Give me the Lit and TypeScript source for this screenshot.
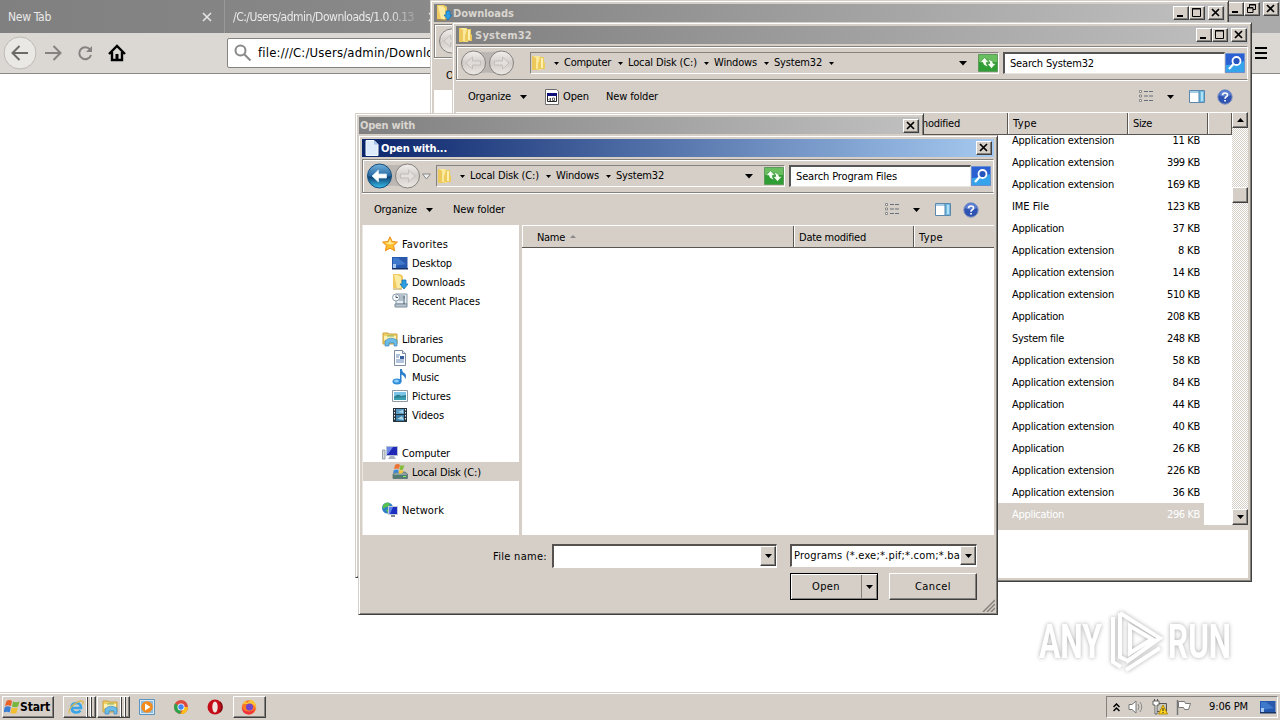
import { LitElement, html, svg, css } from "lit";
import { customElement, property, query } from "lit/decorators.js";
import { classMap } from "lit/directives/class-map.js";

interface FileRow {
  type: string;
  size: string;
  w: number;
}

interface TreeItem {
  label: string;
  icon: string;
  w: number;
  child?: boolean;
  selected?: boolean;
}

const EXT = { type: "Application extension", w: 102 };
const APP = { type: "Application", w: 52 };

const FILES: FileRow[] = [
  { ...EXT, size: "11 KB" },
  { ...EXT, size: "399 KB" },
  { ...EXT, size: "169 KB" },
  { type: "IME File", w: 37, size: "123 KB" },
  { ...APP, size: "37 KB" },
  { ...EXT, size: "8 KB" },
  { ...EXT, size: "14 KB" },
  { ...EXT, size: "510 KB" },
  { ...APP, size: "208 KB" },
  { type: "System file", w: 52, size: "248 KB" },
  { ...EXT, size: "58 KB" },
  { ...EXT, size: "84 KB" },
  { ...APP, size: "44 KB" },
  { ...EXT, size: "40 KB" },
  { ...APP, size: "26 KB" },
  { ...EXT, size: "226 KB" },
  { ...EXT, size: "36 KB" },
  { ...APP, size: "296 KB" },
];

const TREE: (TreeItem | null)[] = [
  { label: "Favorites", icon: "star", w: 46 },
  { label: "Desktop", icon: "desktop", w: 40, child: true },
  { label: "Downloads", icon: "downloads", w: 53, child: true },
  { label: "Recent Places", icon: "recent", w: 68, child: true },
  null,
  { label: "Libraries", icon: "libraries", w: 41 },
  { label: "Documents", icon: "document", w: 54, child: true },
  { label: "Music", icon: "music", w: 27, child: true },
  { label: "Pictures", icon: "picture", w: 39, child: true },
  { label: "Videos", icon: "video", w: 32, child: true },
  null,
  { label: "Computer", icon: "computer", w: 48 },
  { label: "Local Disk (C:)", icon: "disk", w: 69, child: true, selected: true },
  null,
  { label: "Network", icon: "network", w: 42 },
];

const ICONS: Record<string, any> = {
  star: svg`<path d="M8 .8l2.200 4.700 5.200.6-3.800 3.500 1 5.200L8 12.200l-4.600 2.600 1-5.200L.6 6.100l5.200-.6z" fill="#ffc02e" stroke="#e98b1c"/><path d="M8 3l1.400 3.500 3.500.5L8 8.500 3 7l3.600-.5z" fill="#ffe99a"/>`,
  desktop: svg`<path d="M0 2h15.500v12H0z" fill="#2457ae"/><path d="M1 3h14v6L1 11z" fill="#3f79cc"/><path d="M6 3h9v7z" fill="#2a58ab"/><path d="M0 13h16v1.500H0z" fill="#173363"/><path d="M1 9h3v4H1z" fill="#a9c8ee"/>`,
  folder: svg`<path d="M1 1h8v14H1z" fill="#edc85c"/><path d="M2 1h6l2 2v12l-5-1V3z" fill="#fbe99b"/><path d="M9 2h4v5l1 1v6H7V9z" fill="#ecca5c"/><path d="M10 3h2v10h-2z" fill="#fff0b0"/>`,
  downloads: svg`<path d="M1 0h7l3 2v12H1z" fill="#f1cb5f"/><path d="M2 1h4l3 2v12l-4-1z" fill="#fbeaa2"/><path d="M1 15h9" stroke="#bb953a"/><path d="M10 6h4v4h2l-4 5-4-5h2z" fill="#2c9fe3" stroke="#1774b8" stroke-width=".8"/>`,
  recent: svg`<path d="M4 1h11v10H4z" fill="#e7eef3" stroke="#8597a6"/><path d="M7 3h6M7 5h6M7 7h4" stroke="#7c8fa0"/><path d="M3 11h12v3H3z" fill="#b8c5cf" stroke="#7a8b99"/><circle cx="4" cy="4.500" r="3.500" fill="#f6f9fb" stroke="#8fa0ad"/><path d="M4 2.500v2h2" stroke="#556" fill="none"/><path d="M12 3v8" stroke="#4a5c6c"/>`,
  libraries: svg`<path d="M1 2h5l1 1h8v10H1z" fill="#f2cf63" stroke="#c9a13f"/><path d="M2 5h12v4H2z" fill="#fdf0b5"/><path d="M3 10q5-5 12-1v6h-3v-3H7v3H3z" fill="#6cbce9" stroke="#3f88bb" stroke-width=".7"/><path d="M5 5h7" stroke="#7bb565"/>`,
  document: svg`<path d="M2.500.5h8l3 3v12h-11z" fill="#fff" stroke="#7c8ba0"/><path d="M10.500.5v3h3" fill="#dbe6f2" stroke="#7c8ba0"/><path d="M4 5h4M4 7h3M9 8h3M4 10h8M4 12h8" stroke="#6287b8"/><path d="M8 6h4v3H8z" fill="#365f9d"/>`,
  music: svg`<ellipse cx="5" cy="12.500" rx="4.500" ry="3" fill="#2f8ddb"/><ellipse cx="4.500" cy="12" rx="2.500" ry="1.500" fill="#8dcbf6"/><path d="M8 0h2q0 3 3 4.500 2 2 0 6 .5-3-3.500-5v7H8z" fill="#2c7fca"/>`,
  picture: svg`<path d="M.5 2.500h15v11H.5z" fill="#fff" stroke="#8c9aa5"/><path d="M2 4h12v8H2z" fill="#7cc4e8"/><path d="M2 9q4-4 7-1l5-1v5H2z" fill="#2c7f8f"/><path d="M2 10l12-1v3H2z" fill="#3a9fb0"/>`,
  video: svg`<path d="M1 1h14v14H1z" fill="#26323d"/><path d="M4 2h8v5H4z" fill="#5b9dc4"/><path d="M4 8h8v6H4z" fill="#3e7fa8"/><path d="M6 5l5-2v3zM5 12l5-3 2 4z" fill="#acd8e8"/><path d="M2.500 2v12M13.500 2v12" stroke="#e9eef1" stroke-dasharray="1.500 1.500"/>`,
  computer: svg`<path d="M.5 5h2.500v9H.5z" fill="#d5dbe0" stroke="#848e97" stroke-width=".8"/><path d="M4 1h12v10H4z" fill="#b7c3d2"/><path d="M5 2h10v8H5z" fill="#2028b8"/><path d="M5 2h6L6 9H5z" fill="#6d87e6"/><path d="M8 11h4l2 3H6z" fill="#a9b3c0"/>`,
  disk: svg`<path d="M1 10l3-2h9l2.500 2v4.500H1z" fill="#8aa1a2" stroke="#4f6667" stroke-width=".7"/><path d="M1 11h14v3.500H1z" fill="#547b73"/><path d="M11 12.500h3" stroke="#7df06a"/><path d="M3 1q3-2 5 0L7 5Q5 4 2 5z" fill="#ee7330"/><path d="M8.500 1q2 1 4 0L11 5.500q-2 1-3.500 0z" fill="#83bd3a"/><path d="M2 6q3-1 4.500 0L6 9Q4 8 1 9z" fill="#3989d8"/><path d="M7.500 6q2 1 4 0l-1 3q-2 1-4 0z" fill="#f6c736"/>`,
  network: svg`<circle cx="5.500" cy="6" r="5.500" fill="#2f7fc4"/><path d="M2 2q4-3 6 0-1 3-3 3t-4 2q-1-3 1-5zM4 8l4-1-2 4z" fill="#5bc14e"/><path d="M6 4h10v9H6z" fill="#c3ccd8"/><path d="M7 5h8v7H7z" fill="#1c2fc0"/><path d="M7 5h4l-3 7H7z" fill="#5d82ea"/><path d="M9 13h4v2H9z" fill="#7b8794"/>`,
  page: svg`<path d="M2 .5h8l4 4v11H2z" fill="#dceafb" stroke="#f4f9ff"/><path d="M10 .5v4h4" fill="#9fc1ea"/>`,
  exe: svg`<path d="M1.500.5h11l2 2v13h-13z" fill="#fff" stroke="#6c6c6c"/><path d="M3.500 4.500h9v8h-9z" fill="#fff" stroke="#222"/><path d="M3 4h10v3H3z" fill="#10107a"/><path d="M5 10.500l1.500-1.500v3zM8.500 9h2v2.500h-2z" stroke="#222" fill="none" stroke-width=".7"/>`,
  list: svg`<path d="M1.500 1.500h2v2h-2zM1.500 6h2v2h-2zM1.500 10.500h2v2h-2z" fill="#fff" stroke="#888"/><path d="M6 2.500h4M11 2.500h4M6 7h4M11 7h4M6 11.500h4M11 11.500h4" stroke="#66707c"/>`,
  pane: svg`<path d="M.5 1.500h15v12H.5z" fill="#fff" stroke="#5c87ad"/><path d="M1 2h9v2H1z" fill="#a8cde6"/><path d="M10 2h5v11h-5z" fill="#6fbbe0"/><path d="M12 3h2v9h-2z" fill="#b3e0f4"/><path d="M10 2v11" stroke="#4c83ad"/>`,
  help: svg`<circle cx="8" cy="8" r="7.200" fill="#2f53b3" stroke="#7f93bd"/><path d="M2 6a6 5 0 0 1 12 0q-6 3-12 0z" fill="#5d80d2"/><path d="M5.500 6.300q0-2.300 2.500-2.300t2.500 2q0 1.200-1.500 2-1 .6-1 1.700" fill="none" stroke="#fff" stroke-width="1.600"/><path d="M7.200 11h1.700v1.600H7.200z" fill="#fff"/>`,
  ie: svg`<path d="M12.500 11.500Q11 13.500 8.500 13.500 4 13.500 3.500 9 3.500 4 8.500 4 13 4.500 13 9H4" fill="none" stroke="#3aa5e6" stroke-width="2.600"/><path d="M1.500 14.500Q-.5 10 7 4.500 13 .5 15 2.500q.8 1-.6 3" fill="none" stroke="#e0b84a" stroke-width="1.200"/>`,
  player: svg`<path d="M.5.5h15v15H.5z" fill="#d8e8f4" stroke="#5b94c0"/><path d="M2 2h12v12H2z" fill="#8fbbdc"/><circle cx="8" cy="8" r="5.800" fill="#f28a1c"/><path d="M6 4.500L11.500 8 6 11.500z" fill="#fff"/>`,
  chrome: svg`<circle cx="8" cy="8" r="7" fill="#dd4b3e"/><path d="M8 8L2 4.500A7 7 0 0 0 7.500 15z" fill="#2fa24c"/><path d="M8 8h7a7 7 0 0 1-7.500 7l3-5z" fill="#fbc116"/><circle cx="8" cy="8" r="3.500" fill="#fff"/><circle cx="8" cy="8" r="2.700" fill="#4285f4"/>`,
  opera: svg`<circle cx="8" cy="8" r="7.500" fill="#c40d18"/><ellipse cx="8" cy="8" rx="2.700" ry="5.500" fill="#efe6e2"/><path d="M13 3a7 7 0 0 1 0 10" stroke="#7c0b10" fill="none" stroke-width="1.500"/>`,
  firefox: svg`<circle cx="8" cy="8.500" r="7.200" fill="#ff7a26"/><path d="M2 5L4 1.500 6 4l4-3.500Q15.500 3 15 9 12 4 8 5z" fill="#ffc235"/><circle cx="8.500" cy="8" r="3.500" fill="#7345c9"/><path d="M1 6q0 6 6 6.500 5 .5 7-3.500-.5 6-6.500 6.500Q0 15 1 6z" fill="#f0323f"/>`,
  speaker: svg`<path d="M1 5.500h3L8 2v12l-4-3.500H1z" fill="#fff" stroke="#777"/><path d="M10 5q2 3 0 6M12 3q3.500 5 0 10" fill="none" stroke="#8a8a8a"/>`,
  tray: svg`<path d="M3.500 4.500h11v8h-11z" fill="#c8c8bc" stroke="#555"/><path d="M1 2h6v4H5v9H3V6H1z" fill="#fff" stroke="#555" stroke-width=".9"/><path d="M2.500 0v2M5.500 0v2" stroke="#555"/><path d="M11 6l4.500 9h-9z" fill="#ffd51e" stroke="#b58a00"/><path d="M11 9v3M11 13v1" stroke="#222"/>`,
  flag: svg`<path d="M1.500 1v15" stroke="#777" stroke-width="1.500"/><path d="M2.500 2.500h6l1 2h5l-2 6h-4l-1-2h-5z" fill="#fff" stroke="#777"/>`,
  start: svg`<path d="M2.500 2q3-2 5.500 0L7 7Q4 5.500 1 7z" fill="#e8622a"/><path d="M9 2.500q3 1.500 6.500 0L14 7.500q-3 1.500-6 0z" fill="#76b63d"/><path d="M.8 8q3-1.500 6 0l-1 5.500Q3 12-.5 13.500z" fill="#3b7fd4"/><path d="M7.800 8.500q3 1.500 6 0L12.500 14q-3 1.500-6 0z" fill="#f2bd2f"/>`,
};

const icon = (name: string) =>
  html`<svg class="icon" width="16" height="16" viewBox="0 0 16 16">${ICONS[name]}</svg>`;

const arrow = () =>
  html`<svg class="arrow" width="7" height="4"><path d="M0 0h7L3.500 4z" /></svg>`;

const smallArrow = () =>
  html`<svg class="arrow" width="5" height="3"><path d="M0 0h5L2.500 3z" /></svg>`;

const fit = (text: string, w: number) =>
  html`<fit-text .w=${w} .text=${text}></fit-text>`;

// Label that spreads or tightens its letters to fill a given width.
@customElement("fit-text")
export class FitText extends LitElement {
  @property({ type: Number }) w = 0;

  @property({ type: String }) text = "";

  @query("span") label!: HTMLSpanElement;

  updated() {
    this.label.style.letterSpacing = "0px";
    const natural = this.label.getBoundingClientRect().width;
    const gap = (this.w - natural) / this.text.length;
    this.label.style.letterSpacing = `${gap}px`;
  }

  static styles = css`
    :host {
      display: inline-block;
      flex: none;
      white-space: pre;
    }
    span {
      display: inline-block;
    }
  `;

  render() {
    return html`<span>${this.text}</span>`;
  }
}

const shared = css`
  * {
    box-sizing: border-box;
  }
  .icon,
  .arrow,
  svg {
    display: block;
    flex: none;
  }
  .raised {
    background: #d5cfc8;
    border: 1px solid;
    border-color: #fff #404040 #404040 #fff;
    box-shadow: inset -1px -1px 0 #85817c;
  }
`;

@customElement("win-button")
export class WinButton extends LitElement {
  @property({ type: String }) kind = "close";

  static styles = [
    shared,
    css`
      :host {
        display: block;
        flex: none;
        width: 16px;
        height: 14px;
      }
      .raised {
        width: 16px;
        height: 14px;
      }
      svg {
        width: 14px;
        height: 12px;
        fill: none;
        stroke: #000;
      }
    `,
  ];

  glyph() {
    if (this.kind === "min") return svg`<path d="M3 9h6" stroke-width="2" />`;
    if (this.kind === "max")
      return svg`<path d="M2.500 1.500h8v8h-8zM2 2h9" />`;
    if (this.kind === "restore")
      return svg`<path d="M4.500 4V1.500h6v5H8M4 2h7M2.500 4.500h5.500v5H2.500zM2 5h6" />`;
    return svg`<path d="M3 2l7 7M10 2L3 9" stroke-width="1.700" />`;
  }

  render() {
    return html`<div class="raised"><svg>${this.glyph()}</svg></div>`;
  }
}

// Back / forward, breadcrumbs, refresh and search of an explorer window.
@customElement("address-bar")
export class AddressBar extends LitElement {
  @property({ type: Array }) crumbs: [string, number][] = [];

  @property({ type: String }) search = "";

  @property({ type: Number }) labelWidth = 0;

  @property({ type: Number }) searchWidth = 0;

  @property({ type: Boolean }) active = false;

  static styles = [
    shared,
    css`
      :host {
        display: block;
      }
      .bar {
        display: flex;
        align-items: center;
        height: 34px;
        padding: 0 1px 0 3px;
        background: #d5cfc8;
        border: 1px solid;
        border-color: #85817c #fff #85817c #85817c;
        box-shadow: inset 1px 1px 0 #fff, 0 1px 0 #fff;
      }
      .path {
        display: flex;
        align-items: center;
        flex: 1;
        height: 22px;
        margin-right: 4px;
        border: 1px solid;
        border-color: #85817c #fff #fff #85817c;
      }
      .path > .arrow {
        margin: 0 5px 0 7px;
      }
      .space {
        flex: 1;
      }
      .drop {
        margin-right: 11px;
      }
      .search {
        height: 22px;
        padding: 3px 5px;
        line-height: 14px;
        background: #fff;
        border: 2px solid;
        border-width: 2px 1px 1px 2px;
        border-color: #555 #e8e4df #e8e4df #555;
      }
      .nav {
        margin-right: 15px;
      }
      .nav.active {
        margin-right: 1px;
      }
    `,
  ];

  render() {
    const on = this.active;
    return html`<div class="bar">
      <svg class=${classMap({ nav: true, active: on })} width=${on ? 69 : 55} height="28">
        <defs>
          <linearGradient id="gray" x2="0" y2="1">
            <stop offset="0" stop-color="#f2efec" />
            <stop offset=".5" stop-color="#d2cdc9" />
            <stop offset="1" stop-color="#ece8e4" />
          </linearGradient>
          <linearGradient id="blue" x2="0" y2="1">
            <stop offset="0" stop-color="#75b3dc" />
            <stop offset=".48" stop-color="#296ba5" />
            <stop offset=".55" stop-color="#104474" />
            <stop offset="1" stop-color="#38c0eb" />
          </linearGradient>
        </defs>
        <path d="M12 1.500Q27 5 41 1.500V26Q27 21 12 26z" fill="#bbb6b1" />
        <circle cx="13.500" cy="14" r="12" fill=${on ? "url(#blue)" : "url(#gray)"} stroke=${on ? "#174e7c" : "#85827f"} />
        <circle cx="41.500" cy="14" r="12" fill="url(#gray)" stroke="#85827f" />
        <path
          d="M6 14l6.500-6v4h8v4h-8v4z"
          fill=${on ? "#fff" : "#dfdbd8"}
          stroke=${on ? "#cfe4f3" : "#bdb9b5"}
          stroke-width=".8"
        />
        <path d="M49 14l-6.500-6v4h-8v4h8v4z" fill="#e2dfdc" stroke="#bbb7b3" stroke-width=".8" />
        ${on ? svg`<path d="M56.500 12h8l-4 5z" fill="#eee" stroke="#888" />` : ""}
      </svg>
      <div class="path">
        ${icon("folder")}
        ${this.crumbs.map(([text, w]) => html`${smallArrow()}${fit(text, w)}`)}
        ${on ? "" : smallArrow()}
        <span class="space"></span>
        <svg class="drop" width="8" height="5"><path d="M0 0h8L4 4.500z" /></svg>
        <svg width="20" height="18">
          <path d="M.5.5h19v17H.5z" fill="#2f9f35" stroke="#5f9a5d" />
          <path d="M1 1h18v7H1z" fill="#69bf60" />
          <path
            d="M2 8.500l4.500-5 4.500 5H8.300q0 2 2 4-5-.3-5.500-4zM18 9.500l-4.500 5-4.500-5h2.700q0-2-2-4 5 .3 5.500 4z"
            fill="#f4fff2"
            stroke="#2c8c2a"
            stroke-width=".6"
          />
        </svg>
      </div>
      <div class="search" style="width:${this.searchWidth}px">
        ${fit(this.search, this.labelWidth)}
      </div>
      <svg width="21" height="20">
        <path d="M.5.5h19v19H.5z" fill="#2b60d2" stroke="#6a8fd0" />
        <path d="M1 12q9 0 18-4v11H1z" fill="#35a4ea" />
        <circle cx="11.500" cy="8" r="4" fill="#2456bd" stroke="#fff" stroke-width="1.800" />
        <path d="M8.500 11L4 16" stroke="#fff" stroke-width="2.200" />
      </svg>
    </div>`;
  }
}

@customElement("app-root")
export class AppRoot extends LitElement {
  static styles = [
    shared,
    css`
      :host {
        display: block;
        position: relative;
        width: 1280px;
        height: 720px;
        overflow: hidden;
        background: #fff;
        color: #000;
        font: 11px/14px "DejaVu Sans Condensed", "DejaVu Sans", sans-serif;
      }
      .browser {
        display: flex;
        flex-direction: column;
        height: 692px;
      }
      .tabs {
        display: flex;
        height: 33px;
        color: #e9e9e9;
        font-size: 12px;
        background: linear-gradient(90deg, #808080, #888 30%, #aaa 98%);
      }
      .tab {
        display: flex;
        align-items: center;
        justify-content: space-between;
        width: 225px;
        padding: 1px 12px 0 8px;
        border-right: 1px solid #999;
      }
      .tab.path {
        border: 0;
        justify-content: flex-start;
        gap: 14px;
        width: 210px;
        white-space: nowrap;
      }
      .fade {
        mask-image: linear-gradient(90deg, #000 86%, #0004);
      }
      .captions {
        display: flex;
        margin: 2px 1px 0 auto;
      }
      .captions win-button:last-child {
        margin-left: 3px;
      }
      .toolbar {
        display: flex;
        align-items: center;
        height: 41px;
        padding: 0 12px 0 3px;
        background: #dbd8d3;
        border-bottom: 1px solid #8b8986;
      }
      .toolbar .url {
        display: flex;
        align-items: center;
        gap: 6px;
        width: 900px;
        height: 30px;
        margin-left: 92px;
        padding-left: 6px;
        font-size: 13px;
        background: #fff;
        border: 1px solid #85827f;
        border-radius: 2px;
      }
      .menu {
        margin-left: auto;
      }
      .window {
        position: absolute;
        display: flex;
        flex-direction: column;
        padding: 3px;
        background: #d5cfc8;
        border: 1px solid;
        border-color: #d5cfc8 #404040 #404040 #d5cfc8;
        box-shadow: inset 1px 1px 0 #fff, inset -1px -1px 0 #85817c;
      }
      .title {
        display: flex;
        align-items: center;
        flex: none;
        height: 18px;
        padding: 0 1px 0 2px;
        gap: 1px;
        color: #d9d5cf;
        font-weight: bold;
        background: linear-gradient(90deg, #808080, #c0c0c0);
      }
      .title win-button {
        margin-left: 2px;
      }
      .title fit-text {
        margin-right: auto;
        padding-top: 1px;
      }
      .title .group {
        display: flex;
      }
      .title .group win-button {
        margin: 0;
      }
      .title.active {
        padding-right: 2px;
        color: #fff;
        background: linear-gradient(90deg, #0b256b, #a5c9f0);
      }
      .downloads {
        left: 430px;
        top: 0;
        width: 799px;
        height: 300px;
      }
      .downloads .organize {
        flex: none;
        height: 32px;
        padding: 11px 0 0 12px;
      }
      .downloads .below {
        flex: 1;
        background: #fff;
      }
      .window address-bar {
        margin-top: 2px;
      }
      .system {
        left: 452px;
        top: 22px;
        width: 800px;
        height: 560px;
      }
      .commands {
        display: flex;
        align-items: center;
        flex: none;
        height: 32px;
        padding: 1px 15px 0 12px;
      }
      .commands .arrow {
        margin-left: 9px;
      }
      .commands .tools {
        display: flex;
        align-items: center;
        margin-left: auto;
      }
      .tools .arrow {
        margin: 0 15px 0 13px;
      }
      .tools .icon:last-child {
        margin-left: 12px;
      }
      .open-file {
        display: flex;
        align-items: center;
        gap: 3px;
        margin: 0 17px;
      }
      .plain {
        margin-left: 20px;
      }
      .listing {
        display: flex;
        height: 413px;
        background: #fff;
      }
      .table {
        display: flex;
        flex-direction: column;
        flex: 1;
        overflow: hidden;
      }
      .header {
        display: flex;
        flex: none;
        height: 23px;
        overflow: hidden;
        background: #d5cfc8;
        border-top: 1px solid #fff;
        border-bottom: 1px solid #5a5753;
      }
      .cell {
        flex: none;
        padding: 4px 4px 0 5px;
        border-right: 1px solid #5a5753;
        box-shadow: inset 1px 0 0 #fff;
        white-space: nowrap;
      }
      .cell.date {
        width: 120px;
      }
      .cell.type {
        width: 120px;
      }
      .cell.size {
        width: 80px;
      }
      .cell.rest {
        width: 24px;
      }
      .cell.gap {
        width: 432px;
      }
      .rows {
        margin-top: -6px;
      }
      .clip {
        overflow: hidden;
        flex: 1;
      }
      .row {
        display: flex;
        align-items: center;
        justify-content: space-between;
        width: 748px;
        height: 22px;
        padding: 2px 4px 0 556px;
      }
      .row.selected {
        color: #fff;
        background: #d5cfc8;
      }
      .scroll {
        display: flex;
        flex-direction: column;
        width: 16px;
        background: repeating-conic-gradient(#fff 0 25%, #d5cfc8 0 50%) 0 0 / 2px
          2px;
      }
      .scroll .raised {
        display: grid;
        place-items: center;
        height: 16px;
      }
      .scroll .thumb {
        margin: 59px 0 auto;
      }
      .up {
        transform: rotate(180deg);
      }
      .details {
        flex: 1;
        margin-top: 5px;
        background: #fff;
      }
      .open-with {
        left: 355px;
        top: 113px;
        width: 569px;
        height: 465px;
      }
      .open-with .title {
        height: 17px;
        padding-left: 1px;
      }
      .open-with .title fit-text {
        padding-top: 0;
      }
      .dialog {
        left: 358px;
        top: 135px;
        width: 640px;
        height: 480px;
      }
      .dialog .header .cell {
        padding-top: 5px;
      }
      .body {
        display: flex;
        flex: none;
        height: 310px;
      }
      .tree {
        width: 157px;
        padding-top: 9px;
        background: #fff;
        border-left: 1px solid #eae7e3;
      }
      .item {
        display: flex;
        align-items: center;
        gap: 4px;
        height: 19px;
        padding-left: 19px;
      }
      .item fit-text {
        padding-top: 2px;
      }
      .item.child {
        padding-left: 29px;
      }
      .item.selected {
        background: #d5cfc8;
      }
      .files {
        flex: 1;
        overflow: hidden;
        margin-left: 3px;
        background: #fff;
      }
      .cell.name {
        display: flex;
        gap: 5px;
        width: 272px;
        padding-left: 15px;
      }
      .sort {
        margin-top: 4px;
      }
      .footer {
        display: grid;
        grid-template-columns: 225px 187px;
        justify-content: end;
        gap: 5px 13px;
        padding: 9px 17px 0 0;
      }
      .field {
        display: flex;
        height: 24px;
        background: #fff;
        border: 2px solid;
        border-width: 2px 1px 1px 2px;
        border-color: #55524f #fff #fff #55524f;
      }
      .field .raised {
        display: grid;
        place-items: center;
        width: 16px;
        margin: 0 0 1px auto;
        flex: none;
      }
      .field.filter {
        height: 23px;
      }
      .field .value {
        padding: 3px 0 0 2px;
      }
      .name-row {
        display: grid;
        grid-template-columns: auto 225px;
        gap: 5px;
        justify-content: end;
      }
      .name-row fit-text {
        margin-top: 6px;
      }
      .buttons {
        display: flex;
        justify-content: space-between;
        grid-column: 2;
      }
      .push {
        display: grid;
        place-items: center;
        width: 88px;
        height: 27px;
      }
      .split {
        display: grid;
        grid-template-columns: 1fr 16px;
        align-items: center;
        justify-items: center;
        border: 1px solid #000;
        box-shadow: inset 1px 1px 0 #fff, inset -1px -1px 0 #85817c;
      }
      .split .arrow {
        box-sizing: content-box;
        padding: 10px 4px 9px;
        border-left: 1px solid #85817c;
      }
      .grip {
        position: absolute;
        right: 2px;
        bottom: 2px;
      }
      .watermark {
        position: absolute;
        left: 1032px;
        top: 604px;
        filter: drop-shadow(0 0 2px #0005);
      }
      .watermark text {
        font: bold 49px Roboto, "Liberation Sans", sans-serif;
        fill: #fff;
      }
      .taskbar {
        display: flex;
        align-items: center;
        height: 28px;
        padding: 2px 0 1px 2px;
        background: #d5cfc8;
        border-top: 1px solid #d5cfc8;
        box-shadow: inset 0 1px 0 #fff;
      }
      .taskbar .raised {
        display: flex;
        align-items: center;
        height: 22px;
      }
      .start {
        width: 52px;
        padding-left: 1px;
        font-size: 12px;
        font-weight: bold;
      }
      .stacks {
        display: flex;
        gap: 1px;
        margin: 0 9px;
      }
      .stack {
        width: 33px;
        padding-left: 4px;
        gap: 2px;
      }
      .stack i {
        width: 2px;
        height: 20px;
        border-left: 1px solid #fff;
        border-right: 1px solid #404040;
        flex: none;
      }
      .quick {
        display: flex;
        align-items: center;
        gap: 18px;
        padding-right: 10px;
      }
      .firefox {
        width: 33px;
        padding-left: 7px;
      }
      .clock {
        display: flex;
        align-items: center;
        height: 22px;
        width: 172px;
        margin: 0 2px 0 auto;
        padding-left: 6px;
        gap: 8px;
        border: 1px solid;
        border-color: #85817c #fff #fff #85817c;
      }
      .clock fit-text {
        margin: 0 4px 0 9px;
      }
    `,
  ];

  captions() {
    return html`<span class="group">
        <win-button kind="min"></win-button>
        <win-button kind="max"></win-button>
      </span>
      <win-button></win-button>`;
  }

  tools() {
    return html`<div class="tools">
      ${icon("list")}${arrow()}${icon("pane")}${icon("help")}
    </div>`;
  }

  browser() {
    return html`<div class="browser">
      <div class="tabs">
        <div class="tab">
          ${fit("New Tab", 43)}
          <svg width="10" height="10">
            <path d="M1 1l8 8M9 1L1 9" stroke="#e6e6e6" stroke-width="1.600" />
          </svg>
        </div>
        <div class="tab path">
          <span class="fade">${fit("/C:/Users/admin/Downloads/1.0.0.13", 181)}</span>
          <svg width="10" height="10">
            <path d="M1 1l8 8M9 1L1 9" stroke="#e6e6e6" stroke-width="1.600" />
          </svg>
        </div>
        <div class="captions">
          <win-button kind="min"></win-button>
          <win-button kind="restore"></win-button>
          <win-button></win-button>
        </div>
      </div>
      <div class="toolbar">
        <svg width="132" height="34" fill="none" stroke-width="2">
          <circle cx="17" cy="17" r="16" fill="#eae8e4" stroke="#bdbab6" stroke-width="1" />
          <path d="M25 17H10M16.500 10L9.500 17l7 7" stroke="#6c6b69" />
          <path d="M42 17h15M50.500 10l7 7-7 7" stroke="#858381" />
          <path d="M87 13.500A6 6 0 1 0 88 19" stroke="#858381" />
          <path d="M89 10v6h-6z" fill="#858381" />
          <path d="M106 18l8-8 8 8M109 16v8h10v-8" stroke="#000" stroke-width="2.400" />
          <path d="M112.500 18h3v6h-3z" fill="#000" />
        </svg>
        <div class="url">
          <svg width="18" height="18" fill="none" stroke="#888" stroke-width="2">
            <circle cx="6.500" cy="6.500" r="5" />
            <path d="M10 10l6.500 6.500" />
          </svg>
          ${fit("file:///C:/Users/admin/Downloads/", 201)}
        </div>
        <svg class="menu" width="13" height="12">
          <path d="M0 1h12M0 6h12M0 11h12" stroke="#000" stroke-width="2" />
        </svg>
      </div>
    </div>`;
  }

  downloads() {
    return html`<section class="window downloads">
      <div class="title">
        ${icon("downloads")}${fit("Downloads", 61)}${this.captions()}
      </div>
      <address-bar></address-bar>
      <div class="organize">${fit("Organize", 43)}</div>
      <div class="below"></div>
    </section>`;
  }

  system() {
    return html`<section class="window system">
      <div class="title">
        ${icon("folder")}${fit("System32", 57)}${this.captions()}
      </div>
      <address-bar
        .crumbs=${[
          ["Computer", 47],
          ["Local Disk (C:)", 69],
          ["Windows", 43],
          ["System32", 48],
        ]}
        search="Search System32"
        .labelWidth=${84}
        .searchWidth=${222}
      ></address-bar>
      <div class="commands">
        ${fit("Organize", 43)}${arrow()}
        <span class="open-file">${icon("exe")}${fit("Open", 26)}</span>
        ${fit("New folder", 52)}${this.tools()}
      </div>
      <div class="listing">
        <div class="table">
          <div class="header">
            <div class="cell gap"></div>
            <div class="cell date">${fit("Date modified", 67)}</div>
            <div class="cell type">${fit("Type", 24)}</div>
            <div class="cell size">${fit("Size", 19)}</div>
            <div class="cell rest"></div>
          </div>
          <div class="clip">
            <div class="rows">
              ${FILES.map(
                (f, i) => html`<div
                  class=${classMap({ row: true, selected: i === FILES.length - 1 })}
                >
                  ${fit(f.type, f.w)}${fit(f.size, f.size.length * 5.5)}
                </div>`
              )}
            </div>
          </div>
        </div>
        <div class="scroll">
          <div class="raised"><span class="up">${arrow()}</span></div>
          <div class="raised thumb"></div>
          <div class="raised">${arrow()}</div>
        </div>
      </div>
      <div class="details"></div>
    </section>`;
  }

  dialog() {
    return html`<section class="window dialog">
      <div class="title active">
        ${icon("page")}${fit("Open with...", 66)}<win-button></win-button>
      </div>
      <address-bar
        active
        .crumbs=${[
          ["Local Disk (C:)", 69],
          ["Windows", 43],
          ["System32", 48],
        ]}
        search="Search Program Files"
        .labelWidth=${101}
        .searchWidth=${182}
      ></address-bar>
      <div class="commands">
        ${fit("Organize", 43)}${arrow()}
        <span class="plain">${fit("New folder", 52)}</span>${this.tools()}
      </div>
      <div class="body">
        <div class="tree">
          ${TREE.map((t) =>
            t
              ? html`<div
                  class=${classMap({
                    item: true,
                    child: !!t.child,
                    selected: !!t.selected,
                  })}
                >
                  ${icon(t.icon)}${fit(t.label, t.w)}
                </div>`
              : html`<div class="item"></div>`
          )}
        </div>
        <div class="files">
          <div class="header">
            <div class="cell name">
              ${fit("Name", 28)}
              <svg class="sort" width="6" height="3"><path d="M3 0l3 3H0z" fill="#888" /></svg>
            </div>
            <div class="cell date">${fit("Date modified", 67)}</div>
            <div class="cell type">${fit("Type", 24)}</div>
          </div>
        </div>
      </div>
      <div class="footer">
        <div class="name-row">
          ${fit("File name:", 54)}
          <div class="field"><span class="raised">${arrow()}</span></div>
        </div>
        <div class="field filter">
          <span class="value">${fit("Programs (*.exe;*.pif;*.com;*.ba", 166)}</span>
          <span class="raised">${arrow()}</span>
        </div>
        <div class="buttons">
          <div class="push split">${fit("Open", 28)}${arrow()}</div>
          <div class="push raised">${fit("Cancel", 36)}</div>
        </div>
      </div>
      <svg class="grip" width="13" height="13">
        <path d="M1 13L13 1M5 13l8-8M9 13l4-4" stroke="#85817c" stroke-width="1.500" />
      </svg>
    </section>`;
  }

  taskbar() {
    return html`<div class="taskbar">
      <div class="raised start">${icon("start")}${fit("Start", 30)}</div>
      <div class="stacks">
        <div class="raised stack">${icon("ie")}<i></i><i></i></div>
        <div class="raised stack">${icon("libraries")}<i></i><i></i></div>
      </div>
      <div class="quick">
        ${icon("player")}${icon("chrome")}${icon("opera")}
      </div>
      <div class="raised firefox">${icon("firefox")}</div>
      <div class="clock">
        <svg width="7" height="9" fill="none" stroke="#000" stroke-width="1.500">
          <path d="M.5 4l3-3 3 3M.5 8l3-3 3 3" />
        </svg>
        ${icon("speaker")}${icon("tray")}${icon("flag")}
        ${fit("9:06 PM", 39)}${icon("desktop")}
      </div>
    </div>`;
  }

  render() {
    return html`
      ${this.browser()}${this.downloads()}${this.system()}
      <section class="window open-with">
        <div class="title">${fit("Open with", 55)}<win-button></win-button></div>
      </section>
      ${this.dialog()}${this.taskbar()}
      <svg class="watermark" width="216" height="76">
        <text x="7" y="54" textLength="63" lengthAdjust="spacingAndGlyphs">ANY</text>
        <text x="136" y="54" textLength="63" lengthAdjust="spacingAndGlyphs">RUN</text>
        <path
          d="M88 9v44l6 3M81 13v45l8 5M88 9l40 25-34 24M98 22v27l22-14zM94 66l34-22"
          fill="none"
          stroke="#fff"
          stroke-width="4"
        />
      </svg>
    `;
  }
}
